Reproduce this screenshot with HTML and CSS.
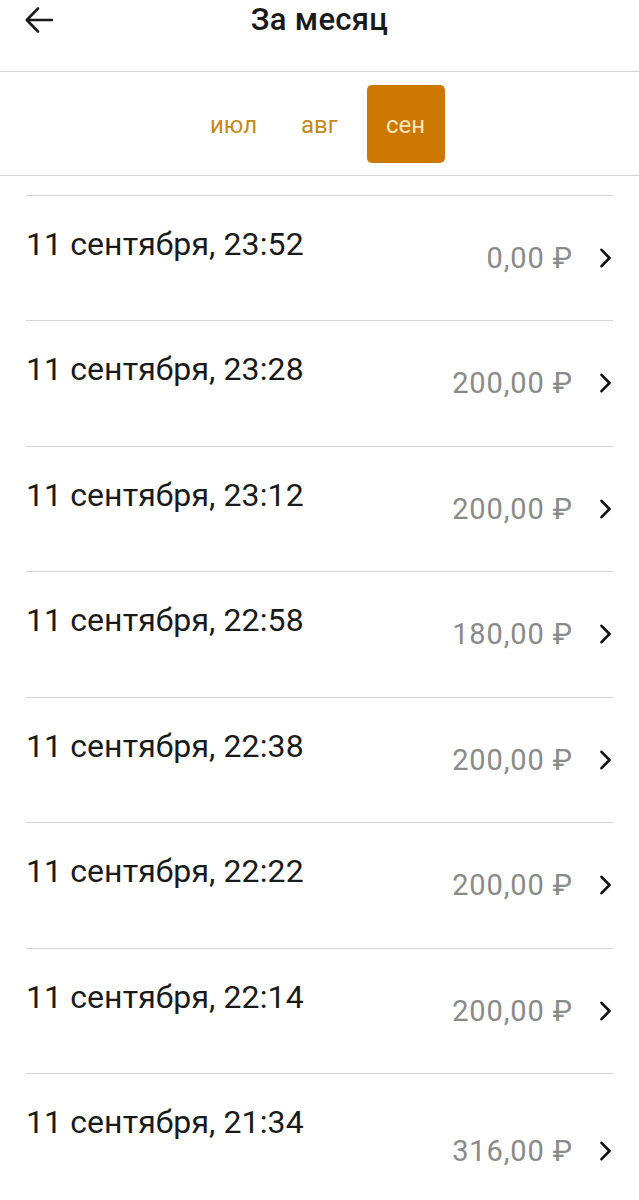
FILE: index.html
```html
<!DOCTYPE html>
<html lang="ru">
<head>
<meta charset="utf-8">
<title>За месяц</title>
<link rel="stylesheet" href="styles.css">
</head>
<body>
<div class="screen">
  <header class="topbar">
    <button class="back" aria-label="Назад">
      <svg width="28" height="26" viewBox="0 0 28 26"><path d="M2 13H27M13 1.5L1.8 13L13 24.5" fill="none" stroke="#1a1a1a" stroke-width="2.6" stroke-linecap="round" stroke-linejoin="round"/></svg>
    </button>
    <h1 class="title">За месяц</h1>
  </header>
  <nav class="tabs">
    <div class="tab">июл</div>
    <div class="tab">авг</div>
    <div class="tab tab--active">сен</div>
  </nav>
  <ul class="list">
    <li class="row"><span class="date">11 сентября, 23:52</span><span class="right"><span class="amount">0,00 ₽</span><svg class="chev" width="14" height="20" viewBox="0 0 14 20"><path d="M2.5 1.8L10.5 10L2.5 18.2" fill="none" stroke="#111" stroke-width="2.6" stroke-linecap="round" stroke-linejoin="round"/></svg></span></li>
    <li class="row"><span class="date">11 сентября, 23:28</span><span class="right"><span class="amount">200,00 ₽</span><svg class="chev" width="14" height="20" viewBox="0 0 14 20"><path d="M2.5 1.8L10.5 10L2.5 18.2" fill="none" stroke="#111" stroke-width="2.6" stroke-linecap="round" stroke-linejoin="round"/></svg></span></li>
    <li class="row"><span class="date">11 сентября, 23:12</span><span class="right"><span class="amount">200,00 ₽</span><svg class="chev" width="14" height="20" viewBox="0 0 14 20"><path d="M2.5 1.8L10.5 10L2.5 18.2" fill="none" stroke="#111" stroke-width="2.6" stroke-linecap="round" stroke-linejoin="round"/></svg></span></li>
    <li class="row"><span class="date">11 сентября, 22:58</span><span class="right"><span class="amount">180,00 ₽</span><svg class="chev" width="14" height="20" viewBox="0 0 14 20"><path d="M2.5 1.8L10.5 10L2.5 18.2" fill="none" stroke="#111" stroke-width="2.6" stroke-linecap="round" stroke-linejoin="round"/></svg></span></li>
    <li class="row"><span class="date">11 сентября, 22:38</span><span class="right"><span class="amount">200,00 ₽</span><svg class="chev" width="14" height="20" viewBox="0 0 14 20"><path d="M2.5 1.8L10.5 10L2.5 18.2" fill="none" stroke="#111" stroke-width="2.6" stroke-linecap="round" stroke-linejoin="round"/></svg></span></li>
    <li class="row"><span class="date">11 сентября, 22:22</span><span class="right"><span class="amount">200,00 ₽</span><svg class="chev" width="14" height="20" viewBox="0 0 14 20"><path d="M2.5 1.8L10.5 10L2.5 18.2" fill="none" stroke="#111" stroke-width="2.6" stroke-linecap="round" stroke-linejoin="round"/></svg></span></li>
    <li class="row"><span class="date">11 сентября, 22:14</span><span class="right"><span class="amount">200,00 ₽</span><svg class="chev" width="14" height="20" viewBox="0 0 14 20"><path d="M2.5 1.8L10.5 10L2.5 18.2" fill="none" stroke="#111" stroke-width="2.6" stroke-linecap="round" stroke-linejoin="round"/></svg></span></li>
    <li class="row row--last"><span class="date">11 сентября, 21:34</span><span class="right"><span class="amount">316,00 ₽</span><svg class="chev" width="14" height="20" viewBox="0 0 14 20"><path d="M2.5 1.8L10.5 10L2.5 18.2" fill="none" stroke="#111" stroke-width="2.6" stroke-linecap="round" stroke-linejoin="round"/></svg></span></li>
  </ul>
</div>
</body>
</html>
```
FILE: styles.css
```css
* { box-sizing: border-box; }
html, body {
  margin: 0;
  padding: 0;
  background: #fff;
}
body {
  font-family: Roboto, "Liberation Sans", "Noto Sans", sans-serif;
  color: #1a1a1a;
}
.screen {
  width: 639px;
  height: 1200px;
  overflow: hidden;
}
.topbar {
  position: relative;
  height: 72px;
  border-bottom: 1px solid #d4d4d4;
}
.back {
  position: absolute;
  left: 25px;
  top: 7px;
  padding: 0;
  border: 0;
  background: none;
  line-height: 0;
}
.title {
  margin: 0;
  text-align: center;
  font-size: 31px;
  font-weight: 500;
  line-height: 40px;
  letter-spacing: 0.3px;
  color: #1a1a1a;
}
.tabs {
  display: flex;
  justify-content: center;
  gap: 8px;
  padding: 13px 0 12px;
  border-bottom: 1px solid #d4d4d4;
}
.tab {
  width: 78px;
  height: 78px;
  display: flex;
  align-items: center;
  justify-content: center;
  font-size: 24px;
  color: #c48a17;
  border-radius: 5px;
  padding-top: 2px;
}
.tab--active {
  background: #cc7700;
  color: #fde5b8;
}
.list {
  list-style: none;
  margin: 19px 26px 0;
  padding: 0;
}
.row {
  height: 125.43px;
  border-top: 1px solid #d4d4d4;
  padding-top: 28px;
  display: flex;
  justify-content: space-between;
  align-items: flex-start;
}
.date {
  font-size: 32px;
  line-height: 40px;
  color: #1a1a1a;
  letter-spacing: 0.1px;
}
.right {
  display: flex;
  align-items: center;
  gap: 26px;
  margin-top: 16px;
}
.row--last .right {
  margin-top: 31px;
}
.amount {
  font-size: 29px;
  line-height: 36px;
  letter-spacing: 0.9px;
  color: #8a8a8a;
}
.chev {
  display: block;
}
```
